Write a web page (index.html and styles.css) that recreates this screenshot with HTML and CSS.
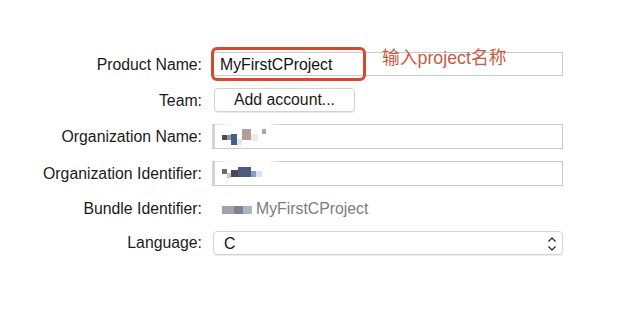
FILE: index.html
```html
<!DOCTYPE html>
<html lang="en">

<head>
    <meta charset="UTF-8">
    <title>New Project Options</title>
    <link rel="stylesheet" href="styles.css">
</head>

<body>
    <div class="form">
        <p class="label">Product Name:</p>
        <div class="field product">
            <span class="value">MyFirstCProject</span>
            <div class="highlight"></div>
            <p class="note">输入project名称</p>
        </div>

        <p class="label">Team:</p>
        <div class="team">
            <button class="btn">Add account...</button>
        </div>

        <p class="label">Organization Name:</p>
        <div class="field masked">
            <div class="cover"></div>
            <div class="pixels">
                <i style="background:#2b2b33;width:5px;height:5px;margin-top:6px"></i>
                <i style="background:#7d8590;width:4px;height:5px;margin-top:6px"></i>
                <i style="background:#24466e;width:6px;height:11px;margin-top:5px"></i>
                <i style="background:#d6e4f0;width:5px;height:6px;margin-top:10px"></i>
                <i style="background:#a48d8a;width:9px;height:11px"></i>
                <i style="background:#f2e6e0;width:7px;height:7px;margin-top:5px"></i>
                <i style="background:#9e9892;width:4px;height:5px;margin-left:4px"></i>
            </div>
        </div>

        <p class="label">Organization Identifier:</p>
        <div class="field masked">
            <div class="cover"></div>
            <div class="pixels">
                <i style="background:#5a5048;width:5px;height:5px;margin-top:3px"></i>
                <i style="background:#c8c0b8;width:4px;height:5px;margin-top:7px"></i>
                <i style="background:#242a36;width:7px;height:7px;margin-top:4px"></i>
                <i style="background:#2c3f63;width:13px;height:10px;margin-top:1px"></i>
                <i style="background:#6f8fb0;width:5px;height:6px;margin-top:5px"></i>
                <i style="background:#cde0ee;width:6px;height:6px;margin-top:5px"></i>
            </div>
        </div>

        <p class="label">Bundle Identifier:</p>
        <div class="bundle">
            <span class="bundle-mask"></span>
            <span>MyFirstCProject</span>
        </div>

        <p class="label">Language:</p>
        <div class="field popup">
            <span class="value">C</span>
            <svg class="chevrons" width="10" height="16" viewBox="0 0 10 16">
                <path d="M1.5 5.5 L5 2 L8.5 5.5" fill="none" stroke="#333" stroke-width="1.4" />
                <path d="M1.5 10.5 L5 14 L8.5 10.5" fill="none" stroke="#333" stroke-width="1.4" />
            </svg>
        </div>
    </div>
</body>

</html>
```

FILE: styles.css
```css
/* Reset */
* {
    margin: 0;
    padding: 0;
    box-sizing: border-box;
}

body {
    background: #ffffff;
    color: #1a1a1a;
    font-family: 'Liberation Sans', Arial, sans-serif;
    font-size: 15.8px;
    width: 628px;
    height: 326px;
    overflow: hidden;
}

/* Form grid */
.form {
    display: grid;
    grid-template-columns: 202px 351px;
    grid-template-rows: 24px 24px 25px 25px 20px 25px;
    column-gap: 10px;
    row-gap: 12px;
    padding-top: 52px;
}

.label {
    text-align: right;
    align-self: center;
    white-space: nowrap;
    padding-top: 1px;
}

/* Text fields */
.field {
    position: relative;
    display: flex;
    align-items: center;
    background: #fff;
    border: 1px solid #cacaca;
    padding-left: 6px;
    padding-top: 1px;
}

.field .value {
    color: #111;
}

.product {
    margin-left: 1px;
}

.highlight {
    position: absolute;
    left: -3px;
    top: -6px;
    width: 155px;
    height: 34px;
    border: 3px solid #d8472f;
    border-radius: 6px;
}

.note {
    position: absolute;
    left: 168px;
    top: -10px;
    color: #c75a44;
    font-size: 17.8px;
    font-family: 'Liberation Sans', 'Noto Sans CJK SC', sans-serif;
    white-space: nowrap;
}

/* Team button */
.team {
    display: flex;
    align-items: center;
    padding-left: 2px;
}

.btn {
    width: 141px;
    height: 24px;
    background: #fff;
    border: 1px solid #d2d2d2;
    border-radius: 4px;
    box-shadow: 0 1px 1px rgba(0, 0, 0, 0.08);
    font-family: inherit;
    font-size: 15.8px;
    color: #1a1a1a;
}

/* Masked organisation fields */
.masked {
    border-left: 3px solid #d4d4d4;
}

.cover {
    position: absolute;
    left: 0;
    top: -2px;
    width: 66px;
    height: 10px;
    background: linear-gradient(90deg, rgba(255, 255, 255, 0.4), #fff 30%, #fff 80%, rgba(255, 255, 255, 0));
}

.pixels {
    position: relative;
    display: flex;
    align-items: flex-start;
    height: 16px;
    margin-left: 1px;
    opacity: 0.85;
}

.pixels i {
    display: block;
}

/* Bundle identifier */
.bundle {
    display: flex;
    align-items: center;
    gap: 4px;
    padding-left: 10px;
    padding-top: 1px;
    color: #7c7c7c;
}

.bundle-mask {
    width: 30px;
    height: 8px;
    margin-top: 3px;
    background: linear-gradient(90deg, #8a8c94 0 40%, #5e6478 40% 70%, #9aa2b0 70%);
    opacity: 0.8;
}

/* Language popup */
.popup {
    margin-left: 1px;
    margin-top: 1px;
    border-color: #d4d4d4;
    border-radius: 4px;
    box-shadow: 0 1px 1px rgba(0, 0, 0, 0.08);
    padding-left: 10px;
    padding-right: 5px;
    justify-content: space-between;
}
```
